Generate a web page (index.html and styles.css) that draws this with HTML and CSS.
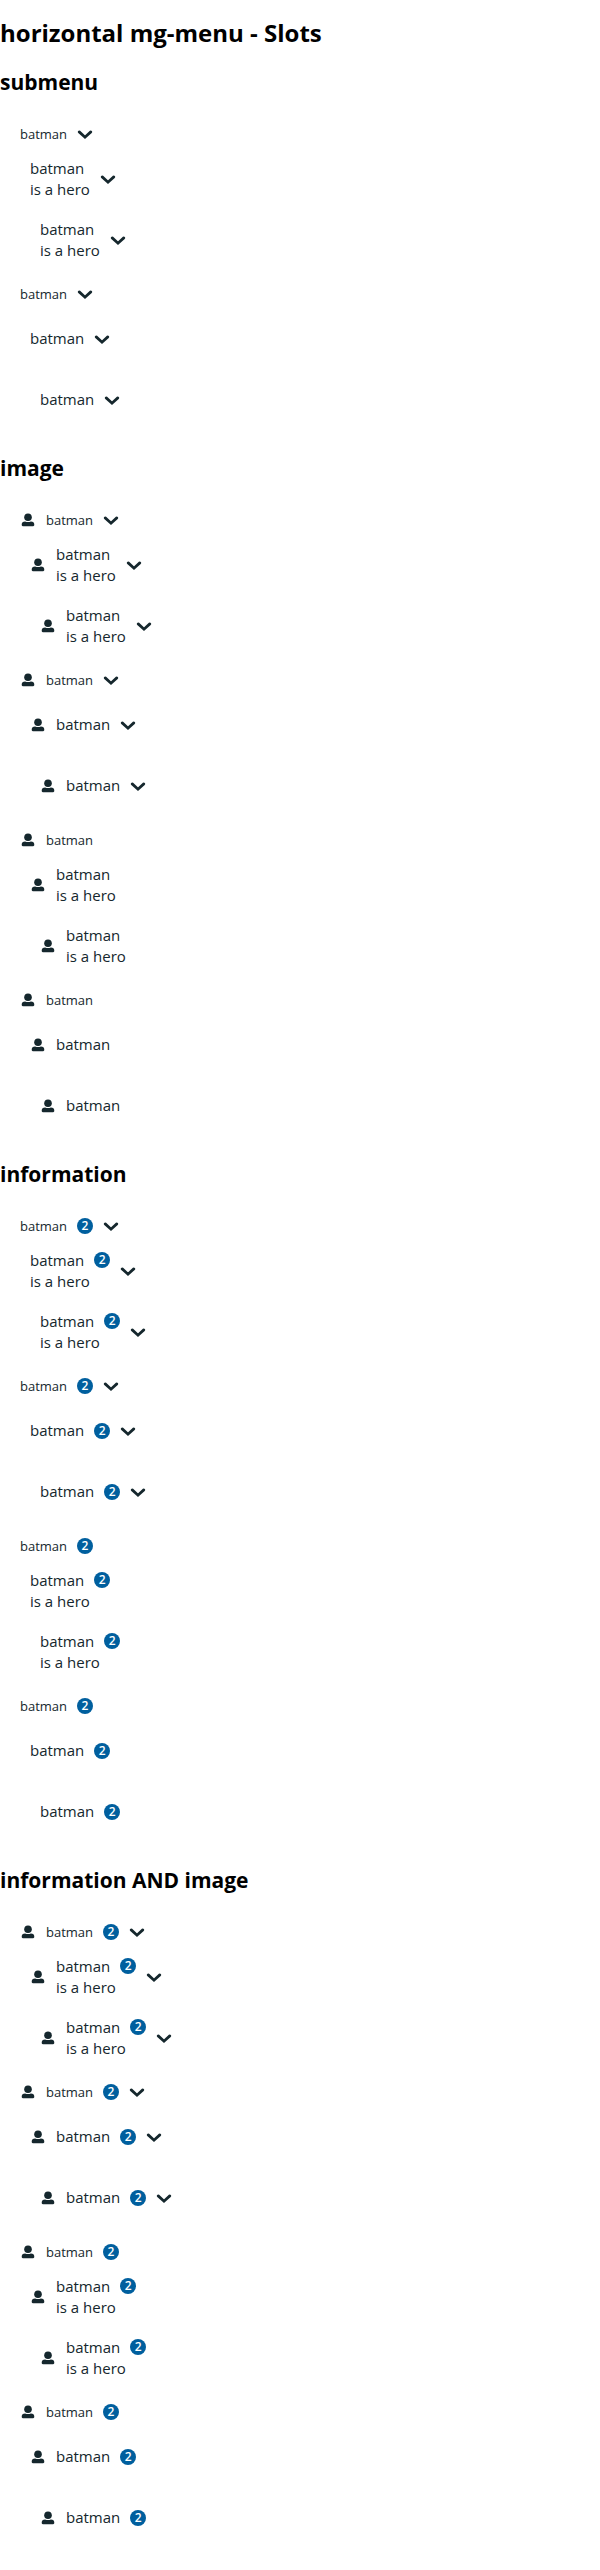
FILE: index.html
```html
<!DOCTYPE html>
<html lang="en">
<head>
<meta charset="utf-8">
<meta name="viewport" content="width=device-width, initial-scale=1">
<title>horizontal mg-menu - Slots</title>
<link rel="stylesheet" href="styles.css">
</head>
<body>
<svg class="sprite" aria-hidden="true">
  <symbol id="user" viewBox="0 0 16 16"><circle cx="8" cy="5.300" r="3.8"/><path d="M1.700 12.800c0-2.200 1.200-3.300 3.400-3.300 1.800.7 4 .7 5.800 0 2.200 0 3.400 1.100 3.400 3.300 0 .9-.4 1.400-1.200 1.400H2.900c-.8 0-1.200-.5-1.200-1.400z"/></symbol>
  <symbol id="chevron" viewBox="0 0 16 16"><path d="M2.200 5.900L8 11.200l5.800-5.300" fill="none" stroke="currentColor" stroke-width="2.800" stroke-linecap="round"/></symbol>
</svg>
<main id="page"><h1 class="title">horizontal mg-menu - Slots</h1></main>
<script src="menu.js"></script>
</body>
</html>
```
FILE: styles.css
```css
* {
  box-sizing: border-box;
}

body {
  margin: 0;
  background: #fff;
  color: #000;
  font-family: "Open Sans", "Noto Sans", sans-serif;
}

.sprite {
  display: none;
}

.title {
  margin: 0;
  padding-top: 17px;
  font-size: 24px;
  line-height: 32px;
}

.section-title {
  margin: 0;
  padding: 19px 0 18px;
  font-size: 21px;
  line-height: 29px;
}

.menu {
  display: flex;
  margin: 0;
  padding: 0;
  list-style: none;
}

.item {
  display: flex;
  align-items: center;
  gap: 10px;
  border: 0;
  background: none;
  color: #15272d;
  font-family: inherit;
  font-size: 15px;
  line-height: 21px;
  text-align: left;
}

.item-regular {
  min-height: 38px;
  padding: 0 20px;
  font-size: 13px;
}

.item-medium {
  min-height: 51px;
  padding: 0 30px;
}

.item-large {
  min-height: 71px;
  padding: 0 40px;
}

.line {
  display: flex;
  align-items: center;
  gap: 10px;
}

.icon {
  flex: none;
  width: 16px;
  height: 16px;
  fill: currentColor;
}

.badge {
  width: 16px;
  height: 16px;
  border-radius: 50%;
  background: #005f9e;
  color: #fff;
  font-size: 12px;
  font-weight: 600;
  line-height: 16px;
  text-align: center;
}
```
FILE: menu.js
```js
const sections = [
  { title: 'submenu', groups: [{ submenu: true }] },
  { title: 'image', groups: [{ image: true, submenu: true }, { image: true }] },
  { title: 'information', groups: [{ info: true, submenu: true }, { info: true }] },
  { title: 'information AND image', groups: [{ image: true, info: true, submenu: true }, { image: true, info: true }] },
];

const icon = name => `<svg class="icon" aria-hidden="true"><use href="#${name}"/></svg>`;

function menu(size, twoLines, { image, info, submenu }) {
  return `<ul class="menu"><li><button type="button" class="item item-${size}">
    ${image ? icon('user') : ''}
    <span class="label">
      <span class="line">batman${info ? '<span class="badge">2</span>' : ''}</span>
      ${twoLines ? '<span class="line">is a hero</span>' : ''}
    </span>
    ${submenu ? icon('chevron') : ''}
  </button></li></ul>`;
}

const page = document.getElementById('page');
for (const { title, groups } of sections) {
  let html = `<h2 class="section-title">${title}</h2>`;
  for (const group of groups) {
    for (const twoLines of [true, false]) {
      for (const size of ['regular', 'medium', 'large']) {
        html += menu(size, twoLines && size !== 'regular', group);
      }
    }
  }
  page.insertAdjacentHTML('beforeend', `<section>${html}</section>`);
}
```
